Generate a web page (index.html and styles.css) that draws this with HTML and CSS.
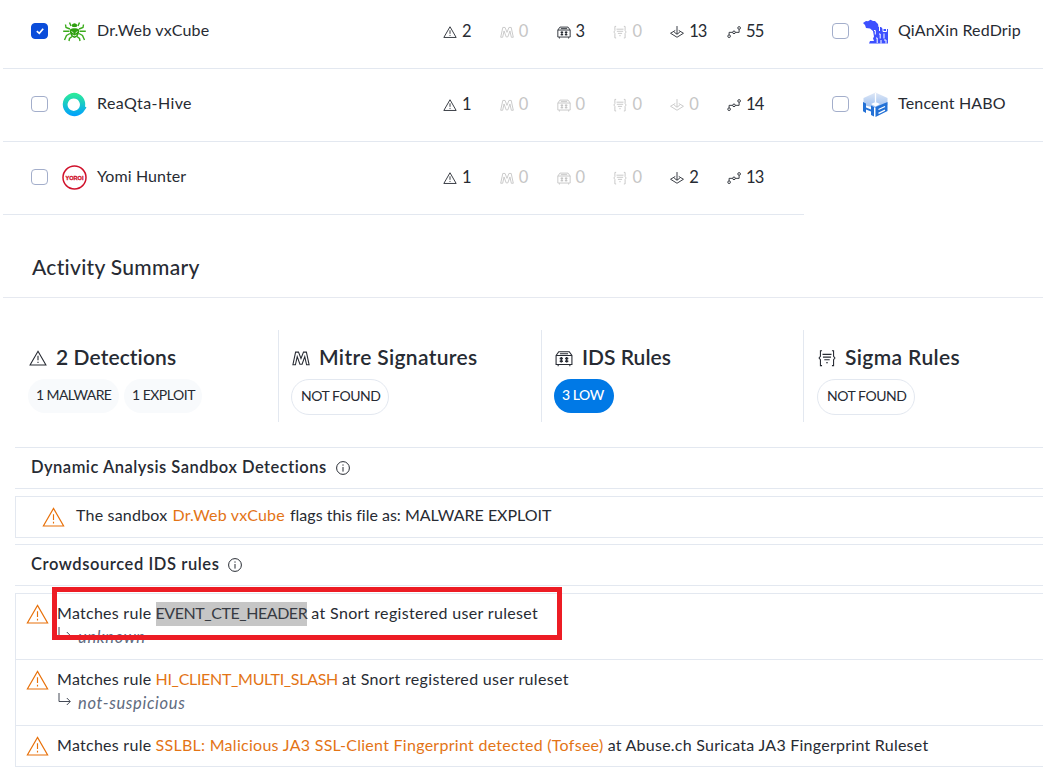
FILE: index.html
```html
<!DOCTYPE html>
<html lang="en">
<head>
<meta charset="utf-8">
<title>Activity Summary</title>
<link rel="stylesheet" href="styles.css">
</head>
<body>
<svg class="sprite" width="0" height="0">
  <symbol id="warn" viewBox="0 0 20 20"><path d="M10 2.5 18.8 17.8H1.2Z"/><path d="M10 7.6v5M10 14.2v1.4"/></symbol>
  <symbol id="mitre" viewBox="0 0 20 20"><path d="M1 17.5 4 3.500h3.200L10 10.500l2.800-7H16l3 14h-2.800L14.200 8.500 11.200 17H8.800L5.800 8.500 3.800 17.500Z"/></symbol>
  <symbol id="ids" viewBox="0 0 20 20"><path d="M1.2 7.2 4.2 3h11.6l3 4.2v10H1.2ZM1.2 7.2h17.6M3.5 17.5v1.8M16.5 17.5v1.8M5.5 5.2h9"/><path d="M7 9v6M13 9v6M5.2 10.5h3.6M5.2 13.7h3.6M11.2 10.5h3.6M11.2 13.7h3.6" stroke-width="1.7"/></symbol>
  <symbol id="sigma" viewBox="0 0 20 20"><path d="M4.5 2H2.7v6L1.2 10l1.500 2v6.500h1.800M15.500 2h1.800v6l1.500 2-1.500 2v6.500h-1.800M5 6h10M5.500 9h9M7 12h6M9 15.300h2"/></symbol>
  <symbol id="drop" viewBox="0 0 20 20"><path d="M7.500 7.800.8 11.800l9.200 5.700 9.200-5.700-6.700-4"/><path d="M10 1.500v11.500M6 10.200l4 3 4-3"/></symbol>
  <symbol id="graph" viewBox="0 0 20 20"><circle cx="3" cy="16" r="1.9"/><circle cx="10" cy="10.500" r="1.900"/><circle cx="17.300" cy="4.200" r="1.900"/><path d="M3 14v-3.500h5M12 10.500h5.300V6.200"/></symbol>
  <symbol id="info" viewBox="0 0 16 16"><circle cx="8" cy="8" r="6.400"/><path d="M8 7v4.600M8 4.400v1.300"/></symbol>
</svg>

<div class="sandboxes">
  <div class="row">
    <span class="check checked"><svg viewBox="0 0 17 16"><path d="M5.800 8.200 8.300 10.300 12.200 5.800"/></svg></span>
    <svg class="logo" viewBox="0 0 25 25"><g fill="none" stroke="#3bab1b" stroke-width="1.400"><path d="M8 10 4 8.500 3.500 5.500M7.500 12.300H1.200M8 14.500 4.500 16.500 2.500 21M10 17.500l-2.500 2-.5 2.500M17 10l4-1.500.5-3M17.500 12.300h6.300M17 14.500l3.500 2 2 4.500M15 17.500l2.500 2 .5 2.500M9 7 7.500 3.500M16 7l1.500-3.500"/></g><path d="M9.500 6Q12.500 2.500 15.500 6L14.500 8h-4Z" fill="#2fa00f"/><path d="M8 10.500Q12.500 7 17 10.500V14q-1 4-4.500 5Q9 18 8 14Z" fill="#2fa00f"/><path d="M8.500 8.800h8M9.500 12.500l2 1.500M15.500 12.500l-2 1.500M10.500 16q2 1.500 4 0" fill="none" stroke="#fff" stroke-width=".9"/></svg>
    <span class="name n1">Dr.Web vxCube</span>
    <div class="stats">
      <span class="stat"><svg><use href="#warn"/></svg><b>2</b></span><span class="stat off"><svg><use href="#mitre"/></svg><b>0</b></span><span class="stat"><svg><use href="#ids"/></svg><b>3</b></span><span class="stat off"><svg><use href="#sigma"/></svg><b>0</b></span><span class="stat"><svg><use href="#drop"/></svg><b>13</b></span><span class="stat"><svg><use href="#graph"/></svg><b>55</b></span>
    </div>
  </div>
  <div class="row">
    <span class="check"></span>
    <svg class="logo" viewBox="0 0 25 25"><path fill-rule="evenodd" fill="url(#rq)" d="M12 .8a11.500 11.500 0 0 1 11 13.700l1.500 1-3.500 5A11.700 11.700 0 1 1 12 .8Zm-.3 5.700a6.200 6.200 0 1 0 .1 0Z"/><defs><linearGradient id="rq" x1="0" y1="0" x2="0" y2="1"><stop offset="0" stop-color="#2eee96"/><stop offset="1" stop-color="#009fff"/></linearGradient></defs></svg>
    <span class="name n2">ReaQta-Hive</span>
    <div class="stats">
      <span class="stat"><svg><use href="#warn"/></svg><b>1</b></span><span class="stat off"><svg><use href="#mitre"/></svg><b>0</b></span><span class="stat off"><svg><use href="#ids"/></svg><b>0</b></span><span class="stat off"><svg><use href="#sigma"/></svg><b>0</b></span><span class="stat off"><svg><use href="#drop"/></svg><b>0</b></span><span class="stat"><svg><use href="#graph"/></svg><b>14</b></span>
    </div>
  </div>
  <div class="row">
    <span class="check"></span>
    <svg class="logo" viewBox="0 0 25 25"><circle cx="12.500" cy="12.500" r="11.500" fill="#fff" stroke="#d0112b" stroke-width="1.500"/><text x="12.500" y="14.500" text-anchor="middle" textLength="18" lengthAdjust="spacingAndGlyphs" class="yoroi">YOROI</text></svg>
    <span class="name n3">Yomi Hunter</span>
    <div class="stats">
      <span class="stat"><svg><use href="#warn"/></svg><b>1</b></span><span class="stat off"><svg><use href="#mitre"/></svg><b>0</b></span><span class="stat off"><svg><use href="#ids"/></svg><b>0</b></span><span class="stat off"><svg><use href="#sigma"/></svg><b>0</b></span><span class="stat"><svg><use href="#drop"/></svg><b>2</b></span><span class="stat"><svg><use href="#graph"/></svg><b>13</b></span>
    </div>
  </div>
  <div class="row right">
    <span class="check"></span>
    <svg class="logo" viewBox="0 0 25 25"><path fill="#3d50ff" d="M0 4 3 2l2 .3L7.500.8 10 2h2l3 3 .5 3H18l2 2h5v14.500H6l1-2.500h4l-1-2.500 1-2-1-5.500-3-2.500L3 9 2 6Z"/><g fill="none" stroke="#fff" stroke-width="1"><path d="M11 11.500h1.300v4M16.500 7v5M20 8v4.500h3.500V8M16 15h1.200v4.500M21 14.500v5M13 19h1.200v5M18 21v3.500M21 21h2v3.500"/></g></svg>
    <span class="name n4">QiAnXin RedDrip</span>
  </div>
  <div class="row right">
    <span class="check"></span>
    <svg class="logo" viewBox="0 0 25 25"><defs><linearGradient id="hb" x1="0" y1="0" x2="0" y2="1"><stop offset="0" stop-color="#dfe8f6"/><stop offset="1" stop-color="#9dbff0"/></linearGradient></defs><path fill="url(#hb)" d="M12.500.5 24.500 6v7l-12 3-12-3V6Z"/><path fill="#2371d6" d="M0 10 3 11.500v4l5 2V13.500l3 1.500v9.500L8 23v-3.500L3 17.500v3.500l-3-1.700ZM12.500 15 24.500 10v9L12.500 25Z"/><path fill="#fff" d="m8 12 4.500-2 4.500 2-4.500 2.500Z"/><path stroke="#fff" stroke-width="1.300" d="M15.500 17.500 22 14.500M15.500 21.300 22 18.200M12.500 1v9"/></svg>
    <span class="name n5">Tencent HABO</span>
  </div>
</div>

<h2 class="title">Activity Summary</h2>

<div class="summary">
  <section>
    <h3><svg><use href="#warn"/></svg><span class="h1">2 Detections</span></h3>
    <div class="pills"><span class="pill w1">1 MALWARE</span><span class="pill w2">1 EXPLOIT</span></div>
  </section>
  <section>
    <h3><svg><use href="#mitre"/></svg><span class="h2">Mitre Signatures</span></h3>
    <div class="pills"><span class="pill outline">NOT FOUND</span></div>
  </section>
  <section>
    <h3><svg><use href="#ids"/></svg><span class="h3">IDS Rules</span></h3>
    <div class="pills"><span class="pill low">3 LOW</span></div>
  </section>
  <section>
    <h3><svg><use href="#sigma"/></svg><span class="h4">Sigma Rules</span></h3>
    <div class="pills"><span class="pill outline">NOT FOUND</span></div>
  </section>
</div>

<div class="details">
  <h4><span class="d1">Dynamic Analysis Sandbox Detections</span><svg><use href="#info"/></svg></h4>
  <div class="card sandbox">
    <div class="rule"><svg class="alert"><use href="#warn"/></svg><p><span class="t1">The sandbox</span> <a class="t2">Dr.Web vxCube</a> <span class="t3">flags this file as: MALWARE EXPLOIT</span></p></div>
  </div>
  <h4><span class="d2">Crowdsourced IDS rules</span><svg><use href="#info"/></svg></h4>
  <div class="card">
    <div class="rule">
      <svg class="alert"><use href="#warn"/></svg>
      <div><p><span class="t4">Matches rule</span> <mark>EVENT_CTE_HEADER</mark> <span class="t5">at Snort registered user ruleset</span></p>
      <p class="kind"><svg viewBox="0 0 14 16"><path d="M1 1v8.500h11M8.800 6l3.500 3.500L8.800 13"/></svg><em class="k1">unknown</em></p></div>
      <div class="marker"></div>
    </div>
    <div class="rule">
      <svg class="alert"><use href="#warn"/></svg>
      <div><p><span class="t4">Matches rule</span> <a class="t6">HI_CLIENT_MULTI_SLASH</a> <span class="t5">at Snort registered user ruleset</span></p>
      <p class="kind"><svg viewBox="0 0 14 16"><path d="M1 1v8.500h11M8.800 6l3.500 3.500L8.800 13"/></svg><em class="k2">not-suspicious</em></p></div>
    </div>
    <div class="rule">
      <svg class="alert"><use href="#warn"/></svg>
      <p><span class="t4">Matches rule</span> <a class="t7">SSLBL: Malicious JA3 SSL-Client Fingerprint detected (Tofsee)</a> <span class="t8">at Abuse.ch Suricata JA3 Fingerprint Ruleset</span></p>
    </div>
  </div>
</div>
</body>
</html>
```
FILE: styles.css
```css
* { box-sizing: border-box; }
html, body { height: 768px; overflow: hidden; }
body {
  margin: 0;
  background: #fff;
  color: #272b33;
  font: 400 16px/24px Lato, "Open Sans", sans-serif;
  font-kerning: normal;
  font-variant-ligatures: none;
}
h2, h3, h4, p { margin: 0; }
svg { fill: none; stroke: currentColor; flex: none; display: block; }
.sprite { position: absolute; }

.sandboxes {
  display: grid;
  grid-template-columns: 801px 1fr;
  grid-template-rows: repeat(3, 73px);
  grid-auto-flow: column;
  margin: -4px 0 0 3px;
}
.row {
  display: flex;
  align-items: center;
  border-bottom: 1px solid #e3e8f0;
  padding: 0 0 2px 28px;
}
.check {
  width: 17px;
  height: 16px;
  border: 1px solid #a3aecb;
  border-radius: 4px;
  margin-right: 14px;
}
.checked { background: #0b4dda; border-color: #0b4dda; }
.checked svg { margin: -1px; width: 17px; height: 16px; color: #fff; stroke-width: 1.7; }
.logo { width: 25px; height: 25px; stroke: none; margin: 1px 10px 0 0; }
.yoroi { font: 900 5.5px "Liberation Sans", sans-serif; fill: #d0112b; stroke: #d0112b; stroke-width: .3; }
.name { width: 346px; white-space: nowrap; padding-bottom: 2px; }
.right .name { width: auto; }
.n1 { letter-spacing: .2px; }
.n2 { letter-spacing: .4px; }
.n3 { letter-spacing: .1px; }
.n4 { letter-spacing: .14px; }
.n5 { letter-spacing: .18px; }
.stats { display: flex; }
.stat { width: 56.8px; display: flex; align-items: center; gap: 5px; padding-top: 2px; }
.stat svg { width: 14px; height: 14px; stroke-width: 1.3; }
.stat b { font-weight: 400; font-size: 16.5px; letter-spacing: -.9px; padding-bottom: 2px; }
.off { color: #c6c6c6; }

.title {
  margin: 27px 0 0 3px;
  height: 56px;
  padding: 13px 0 0 29px;
  border-bottom: 1px solid #e6e9f0;
  font-size: 21px;
  font-weight: 500;
  letter-spacing: .3px;
}

.summary { display: grid; grid-template-columns: 263px 263px 262px 1fr; margin: 32px 0 0 16px; height: 92px; }
.summary section { padding: 16px 0 0 12px; }
.summary section:last-child { padding-left: 13px; }
.summary section:not(:last-child) { border-right: 1px solid #e3e8f0; }
.summary h3 { display: flex; align-items: center; height: 24px; font-size: 21px; font-weight: 600; }
.summary h3 span { padding-bottom: 2px; }
.summary h3 svg { width: 18px; height: 18px; margin: 0 9px 0 1px; stroke-width: 1.2; }
.h1 { letter-spacing: .1px; }
.h2 { letter-spacing: .34px; }
.h4 { letter-spacing: .38px; }
.pills { display: flex; gap: 5px; padding-top: 9px; }
.pill {
  height: 34px;
  border-radius: 17px;
  background: #f8fafc;
  padding: 0 8px;
  font-size: 14px;
  line-height: 32px;
  letter-spacing: -.45px;
  white-space: nowrap;
}
.w1 { width: 91px; letter-spacing: -.6px; }
.w2 { width: 78px; letter-spacing: -.5px; }
.outline { width: 98px; height: 36px; border: 1px solid #e3e8f0; border-radius: 18px; background: #fff; padding-left: 9px; }
.low { width: 60px; background: #0079e6; color: #fff; font-weight: 500; }

.details { margin: 25px 0 0 15px; }
.details h4 {
  display: flex;
  align-items: center;
  height: 42px;
  padding-left: 16px;
  border: solid #e3e8f0;
  border-width: 1px 0;
  font-size: 16.5px;
  font-weight: 600;
}
.details h4 span { padding-bottom: 2px; }
.details h4 svg { width: 16px; height: 16px; margin-left: 8px; }
.d1 { letter-spacing: .5px; }
.d2 { letter-spacing: .58px; }
.card { border: solid #e3e8f0; border-width: 1px 0 0 1px; margin: 7px 0 6px; }
.rule { display: flex; position: relative; padding: 7px 0 9px 10px; border-bottom: 1px solid #e3e8f0; white-space: nowrap; }
.rule p { height: 24px; }
.alert { width: 23px; height: 24px; color: #e8710a; margin: 1px 8px -1px 0; }
.sandbox .rule { padding: 6px 0 10px 26px; }
.sandbox .alert { margin: 2px 11px -2px 0; }
a { color: #e37416; }
mark { background: #c6c6c6; color: #373b43; display: inline-block; line-height: 22px; height: 24px; letter-spacing: -.44px; }
.t1 { letter-spacing: .2px; }
.t2 { letter-spacing: .2px; margin: 0 1px; }
.t4 { letter-spacing: .27px; }
.t5 { letter-spacing: .34px; }
.t6 { letter-spacing: -.31px; }
.t7 { letter-spacing: .28px; }
.t8 { letter-spacing: .25px; }
.rule .kind { display: flex; height: 25px; color: #606b80; font-size: 16.5px; }
.k1, .k2 { letter-spacing: .65px; }
.kind svg { width: 14px; height: 16px; margin: 1px 6px 0 1px; color: #444a56; }
.marker { position: absolute; left: 36px; top: -7px; width: 510px; height: 53px; border: 5px solid #ed1c24; }
```
